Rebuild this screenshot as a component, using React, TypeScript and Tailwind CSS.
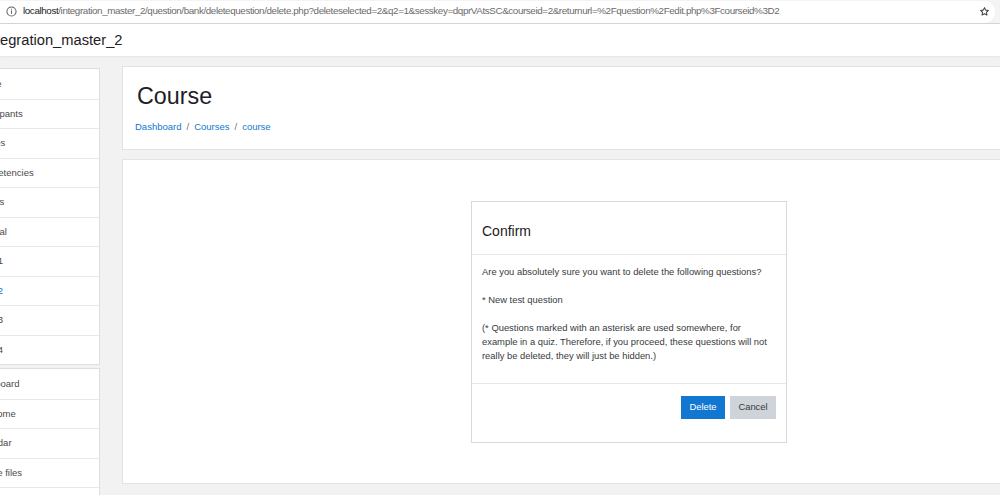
import React from 'react'

const courseNav = [
  { label: 'course' },
  { label: 'Participants' },
  { label: 'Badges' },
  { label: 'Competencies' },
  { label: 'Grades' },
  { label: 'General' },
  { label: 'Topic 1' },
  { label: 'Topic 2', active: true },
  { label: 'Topic 3' },
  { label: 'Topic 4' },
]

const siteNav = [
  { label: 'Dashboard' },
  { label: 'Site home' },
  { label: 'Calendar' },
  { label: 'Private files' },
  { label: 'Content bank' },
]

function NavBlock({ items }: { items: { label: string; active?: boolean }[] }) {
  return (
    <div className="border border-[#dedede] bg-white">
      {items.map((item, i) => (
        <div
          key={item.label}
          className={
            'flex h-[29.5px] items-center pl-[12px] text-[9.5px] ' +
            (i > 0 ? 'border-t border-[#e8e8e8] ' : '') +
            (item.active ? 'text-[#1177d1]' : 'text-[#4a4a4a]')
          }
        >
          {item.label}
        </div>
      ))}
    </div>
  )
}

function UrlBar() {
  return (
    <div className="flex h-[24px] items-center border-b border-[#d5d5d5] bg-[#f4f4f4]">
      <div className="mr-[5px] flex h-[22px] flex-1 items-center rounded-r-full bg-white pl-[6px] pr-[5px]">
        <svg width="11" height="11" viewBox="0 0 12 12" className="mr-[6px]">
          <circle cx="6" cy="6" r="5" fill="none" stroke="#5f6368" strokeWidth="1.1" />
          <rect x="5.45" y="5" width="1.1" height="3.6" fill="#5f6368" />
          <rect x="5.45" y="3" width="1.1" height="1.1" fill="#5f6368" />
        </svg>
        <span className="whitespace-nowrap text-[9.8px] tracking-[-0.38px] text-[#6b6b6b]">
          <span className="text-[#202124]">localhost</span>
          /integration_master_2/question/bank/deletequestion/delete.php?deleteselected=2&amp;q2=1&amp;sesskey=dqprVAtsSC&amp;courseid=2&amp;returnurl=%2Fquestion%2Fedit.php%3Fcourseid%3D2
        </span>
        <svg width="11" height="11" viewBox="0 0 24 24" className="ml-auto">
          <path
            d="M12 3.5l2.6 5.5 6 .7-4.4 4.1 1.2 6-5.4-3-5.4 3 1.2-6L3.4 9.7l6-.7z"
            fill="none"
            stroke="#3c4043"
            strokeWidth="2.2"
            strokeLinejoin="round"
          />
        </svg>
      </div>
    </div>
  )
}

export default function App() {
  return (
    <div className="h-[495px] w-[1000px] overflow-hidden bg-[#f2f2f2] font-['Liberation_Sans',Arial,sans-serif] text-[#373a3c]">
      <UrlBar />
      <nav className="flex h-[32px] items-center bg-white shadow-[0_1px_2px_rgba(0,0,0,0.06)]">
        <span className="-ml-[15.5px] whitespace-nowrap text-[14.7px] text-[#1d2125]">integration_master_2</span>
      </nav>

      <div className="flex">
        <aside className="-ml-[40px] flex w-[140px] shrink-0 flex-col gap-[3px] pt-[12px]">
          <NavBlock items={courseNav} />
          <NavBlock items={siteNav} />
        </aside>

        <main className="ml-[22px] flex w-[1000px] shrink-0 flex-col gap-[9px] pt-[10px]">
          <header className="h-[84px] border border-[#e3e3e3] bg-white pl-[12px]">
            <h1 className="ml-[2px] mt-[15px] text-[23.3px] leading-[28px] text-[#1d2125]">Course</h1>
            <div className="mt-[10px] flex items-center gap-[5px] text-[9.5px] text-[#1177d1]">
              <span>Dashboard</span>
              <span className="text-[#6a737b]">/</span>
              <span>Courses</span>
              <span className="text-[#6a737b]">/</span>
              <span>course</span>
            </div>
          </header>

          <section className="h-[325px] border border-[#e3e3e3] bg-white pt-[41px]">
            <div className="ml-[348px] w-[316px] border border-[#d9d9d9] bg-white">
              <div className="h-[53px] border-b border-[#e6e6e6] px-[10px] pt-[20px]">
                <h2 className="text-[14px] leading-[18px] text-[#1d2125]">Confirm</h2>
              </div>
              <div className="border-b border-[#e6e6e6] px-[10px] pt-[10px] pb-[20px] text-[9.4px] leading-[14px] text-[#373a3c]">
                <p className="mb-[14px]">Are you absolutely sure you want to delete the following questions?</p>
                <p className="mb-[14px]">* New test question</p>
                <p>
                  (* Questions marked with an asterisk are used somewhere, for example in a quiz. Therefore, if you
                  proceed, these questions will not really be deleted, they will just be hidden.)
                </p>
              </div>
              <div className="flex h-[58px] items-start justify-end gap-[5px] px-[10px] pt-[12px]">
                <button className="h-[23px] w-[44px] bg-[#1177d1] text-[9.4px] text-white">Delete</button>
                <button className="h-[23px] w-[46px] bg-[#ced4da] text-[9.4px] text-[#373a3c]">Cancel</button>
              </div>
            </div>
          </section>
        </main>
      </div>
    </div>
  )
}
